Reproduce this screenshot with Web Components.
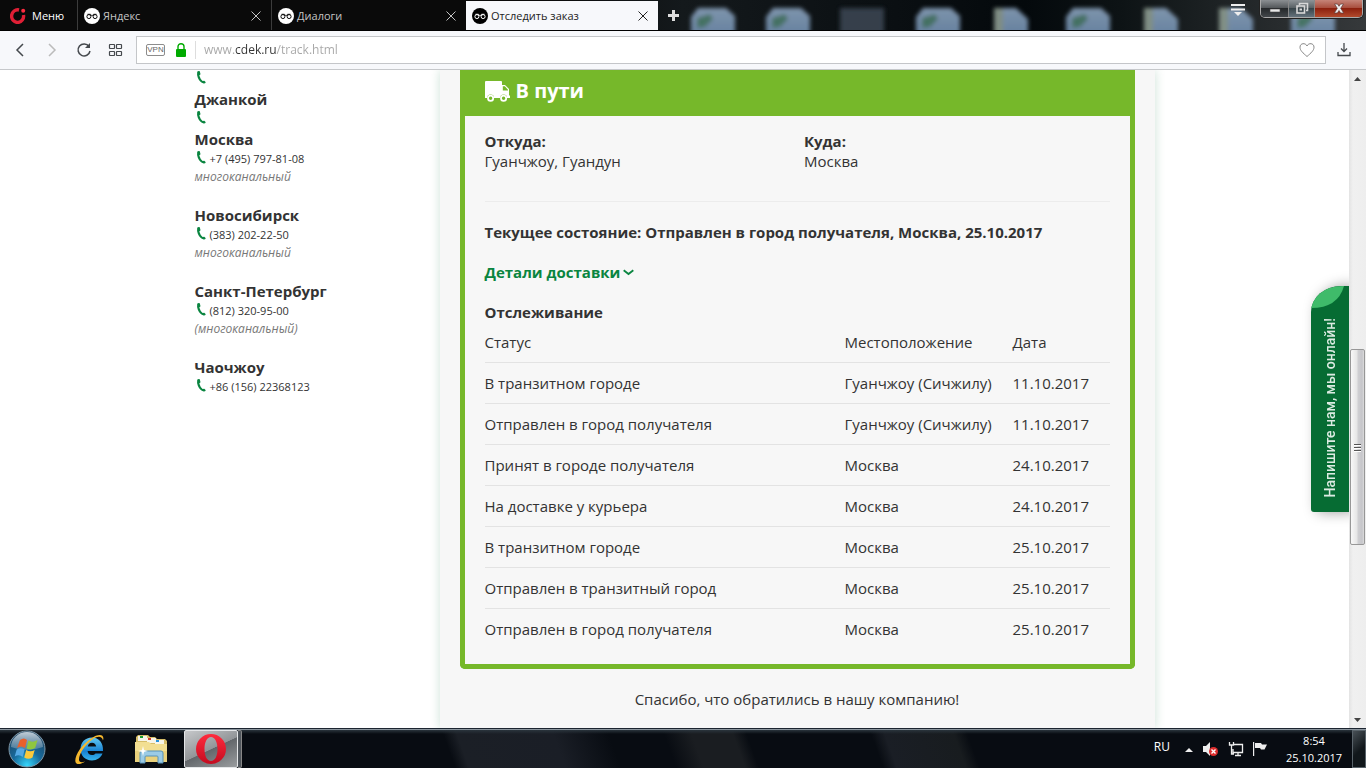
<!DOCTYPE html>
<html lang="ru">
<head>
<meta charset="utf-8">
<title>Отследить заказ</title>
<style>
html,body{margin:0;height:100%}
body{font-family:"Open Sans","Noto Sans",sans-serif;color:#333;background:#fff;overflow:hidden}
</style>
</head>
<body>
<desktop-screen></desktop-screen>
<script>
function define(name, html, setup) {
  const template = document.createElement('template');
  template.innerHTML = '<style>*{box-sizing:border-box}[hidden]{display:none}</style>' + html;
  customElements.define(name, class extends HTMLElement {
    constructor() {
      super();
      this.attachShadow({ mode: 'open' }).append(template.content.cloneNode(true));
    }
    connectedCallback() { if (setup) setup(this.shadowRoot, this); }
  });
}

/* ---------- browser chrome ---------- */
define('browser-tab', `
<style>
:host{display:flex;align-items:center;flex:0 1 194px;min-width:0;height:31px;padding:0 10px 0 6px;border-right:1px solid #3c3c3c;background:#0a0a0a;color:#c4c4c4;font-size:12px;line-height:18px}
:host([active]){flex-basis:192px;height:30px;margin-top:1px;border:0;background:#f7f8fb;color:#222}
:host([last]){border:0}
a{flex:1;display:flex;align-items:center;gap:3px;min-width:0;color:inherit;text-decoration:none;white-space:nowrap;font-size:11px}
svg{flex:none;display:block}
.disc{fill:#fff}.glass{stroke:#0a0a0a}
:host([active]) .disc{fill:#000}:host([active]) .glass{stroke:#fff}
button{border:0;background:none;padding:0;color:inherit;width:10px;height:10px;flex:none}
</style>
<a href="#"><svg width="16" height="16" viewBox="0 0 16 16"><circle class="disc" cx="8" cy="8" r="8"/><g class="glass" fill="none" stroke-width="1"><circle cx="4.900" cy="8.600" r="2"/><circle cx="11.100" cy="8.600" r="2"/><path d="M3.500 6.300h3l1.500 1.500 1.500-1.500h3"/></g></svg><slot></slot></a>
<button aria-label="Закрыть вкладку"><svg width="10" height="10" viewBox="0 0 10 10"><path d="M.5.5l9 9M9.500 .5l-9 9" stroke="currentColor" fill="none"/></svg></button>`);

define('window-controls', `
<style>
:host{display:flex;height:18px;border:1px solid #a9a9a9;border-top:0;border-radius:0 0 5px 5px;overflow:hidden;box-shadow:0 0 0 1px #222}
button{border:0;border-right:1px solid #888;padding:0;display:grid;place-items:center;background:linear-gradient(#8b8f92,#55595c 45%,#25282a 50%,#42464a);width:28px;height:17px}
.max{width:26px;background:linear-gradient(#8e9498,#5a6266 45%,#38454a 50%,#64727c)}
.close{width:47px;border:0;background:linear-gradient(#c58478,#a94f3f 45%,#8c200e 50%,#b24a2c)}
svg{display:block}
</style>
<button aria-label="Свернуть"><svg width="14" height="13"><rect x="2" y="7" width="10" height="3" fill="#e8e8e8" stroke="#444" stroke-width=".6"/></svg></button>
<button class="max" aria-label="Восстановить"><svg width="14" height="13" fill="none" stroke="#d8d8d8" stroke-width="1.6"><path d="M4.500 3V1.500h8v7H11"/><rect x="2" y="4" width="7.500" height="7"/><rect x="5" y="7" width="1.500" height="1" stroke-width="1"/></svg></button>
<button class="close" aria-label="Закрыть"><svg width="14" height="13"><path d="M2.500 2h3l1.500 2.300L8.500 2h3L8.700 6.300 11.700 11H8.600L7 8.500 5.400 11H2.300l3-4.700z" fill="#eee" stroke="#5c3a38" stroke-width=".7"/></svg></button>`);

define('tab-strip', `
<style>
:host{display:flex;position:relative;height:31px;background:linear-gradient(90deg,#0a0a0a 40%,#14191c 50%,#04090c 75%,#0d1315 82%,#36393b 100%);border-bottom:1px solid #000;overflow:hidden}
.glass{position:absolute;left:658px;top:0;z-index:0}
.menu{display:flex;align-items:center;gap:6px;flex:none;width:78px;padding:2px 0 0 10px;border:0;border-right:1px solid #3c3c3c;background:#0a0a0a;color:#fff;font:11px/18px "Open Sans",sans-serif}
browser-tab,.menu,.plus,.list,window-controls{position:relative}
.plus{width:31px;border:0;background:none;padding:0;display:grid;place-items:center}
.space{flex:1}
.list{border:0;background:none;padding:4px 0 0;align-self:flex-start;margin-right:15px}
window-controls{align-self:flex-start;margin-right:3px}
svg{display:block}
</style>
<svg class="glass" width="708" height="31" viewBox="0 0 708 31">
<defs><filter id="b" x="-20%" y="-20%" width="140%" height="140%"><feGaussianBlur stdDeviation="2"/></filter>
<linearGradient id="g" x2="0" y2="1"><stop stop-color="#8ba3bd"/><stop offset="1" stop-color="#6f8cae"/></linearGradient>
<g id="globe"><path d="M0 36V17l7-9h28l9 8v20H0z" fill="url(#g)"/><path d="M6 18l13-4 3 5-8 8-8 1z" fill="#4c7b6c"/></g>
<g id="doc"><path d="M0 8h22l12 11v17H0z" fill="url(#g)"/><path d="M0 8h9v28H0z" fill="#8c9b91"/></g></defs>
<g filter="url(#b)" opacity=".9"><use href="#globe" x="33"/><use href="#globe" x="108"/><path d="M182 8h44v28h-44z" fill="#3a4551"/><use href="#globe" x="258"/><use href="#doc" x="336"/><use href="#globe" x="408"/><use href="#doc" x="486"/><use href="#doc" x="561"/><use href="#globe" x="633"/></g></svg>
<button class="menu"><svg width="16" height="16" viewBox="0 0 16 16"><path d="M9 2A6 6.300 0 1 0 13.500 7" fill="none" stroke="#e01f35" stroke-width="3.400"/><circle cx="13.200" cy="2.800" r="2" fill="#ff2c40"/></svg>Меню</button>
<browser-tab>Яндекс</browser-tab><browser-tab last>Диалоги</browser-tab><browser-tab active>Отследить заказ</browser-tab>
<button class="plus" aria-label="Новая вкладка"><svg width="11" height="11"><path d="M5.500 0v11M0 5.500h11" stroke="#ddd" stroke-width="3"/></svg></button>
<span class="space"></span>
<button class="list" aria-label="Список вкладок"><svg width="14" height="12"><path d="M0 1h14M0 5.500h14" stroke="#eee" stroke-width="2"/><path d="M3 8h8l-4 4z" fill="#eee"/></svg></button>
<window-controls></window-controls>`);

define('address-bar', `
<style>
:host{display:flex;align-items:center;height:39px;padding:0 14px 0 12px;background:#f7f8fb;border-bottom:1px solid #c6c8cb}
nav{display:flex;align-items:center;width:124px;gap:16px;flex:none}
button{border:0;background:none;padding:0;width:16px;height:16px;color:#45494d;flex:none}
svg{display:block}
.dim{color:#bbb}
.field{flex:1;display:flex;align-items:center;height:28px;margin-right:10px;padding:0 10px 0 9px;border:1px solid #c4c6c9;background:#fff}
.vpn{border:1px solid #8c8c8c;border-radius:2px;width:19px;height:12px;font:8px/10px "Liberation Sans",sans-serif;text-align:center;color:#666}
.lock{margin:0 8px 0 10px}
.bar{width:1px;height:18px;background:#ddd;margin-right:8px}
input{flex:1;min-width:0;border:0;outline:0;padding:0;height:20px;font:12px/20px "Open Sans",sans-serif;color:transparent;background:linear-gradient(90deg,#a6a6a6 31px,#333 31px,#333 72px,#a6a6a6 72px);-webkit-background-clip:text;background-clip:text}
</style>
<nav>
<button aria-label="Назад"><svg width="16" height="16"><path d="M11 2L5 8l6 6" fill="none" stroke="currentColor" stroke-width="1.500"/></svg></button>
<button class="dim" aria-label="Вперёд"><svg width="16" height="16"><path d="M5 2l6 6-6 6" fill="none" stroke="currentColor" stroke-width="1.500"/></svg></button>
<button aria-label="Обновить"><svg width="16" height="16"><path d="M13 4.500A6 6 0 1 0 14 9" fill="none" stroke="currentColor" stroke-width="1.500"/><path d="M14 1v5H9z" fill="currentColor"/></svg></button>
<button aria-label="Экспресс-панель"><svg width="16" height="16" fill="none" stroke="currentColor" stroke-width="1.200"><rect x="1.500" y="2.500" width="5" height="4" rx=".5"/><rect x="8.500" y="2.500" width="5" height="4" rx=".5"/><rect x="1.500" y="9.500" width="5" height="4" rx=".5"/><rect x="8.500" y="9.500" width="5" height="4" rx=".5"/></svg></button>
</nav>
<div class="field"><span class="vpn">VPN</span>
<svg class="lock" width="12" height="14"><rect x="1" y="6" width="10" height="8" rx="1" fill="#0a0"/><path d="M3 7V3.500a3 2.800 0 0 1 6 0V7" fill="none" stroke="#0a0" stroke-width="1.400"/></svg>
<span class="bar"></span><input type="text" aria-label="Адрес" value="www.cdek.ru/track.html">
<button aria-label="В закладки"><svg width="16" height="16"><path d="M8 14.500C4 11 1 8.500 1 5.200 1 1 6.500.500 8 4 9.500.5 15 1 15 5.200c0 3.300-3 5.800-7 9.300z" fill="none" stroke="#888"/></svg></button></div>
<button aria-label="Загрузки"><svg width="16" height="16" fill="none" stroke="#45494d" stroke-width="1.300"><path d="M8 1v8M5 6.500l3 3 3-3M2 10v3.500h12V10"/></svg></button>`);

/* ---------- site ---------- */
define('city-contact', `
<style>
:host{display:block;margin-bottom:2px}
:host([note]){margin-bottom:20px}
h3{margin:0;font-size:15px;line-height:18px;font-weight:700}
p{display:flex;gap:3px;margin:0;padding-top:2px;font-size:11px;line-height:18px;min-height:20px}
svg{flex:none;display:block}
em{display:block;font-size:12px;line-height:18px;color:#777}
</style>
<h3></h3><p><svg width="12" height="14" viewBox="0 0 12 14"><path d="M2.200 1.800Q3.200.500 4.800 1.200L5.500 4.300 4.300 5.500Q5.300 9 7.600 11L9.300 10.700 10.800 12.200Q10.200 13.700 8.700 13.600 4.700 12.500 2.800 7.800 1.700 4.500 2.200 1.800z" fill="#0a8540"/></svg><slot></slot></p><em></em>`,
(root, host) => {
  for (const [tag, attr] of [['h3', 'city'], ['em', 'note']]) {
    const el = root.querySelector(tag);
    el.textContent = host.getAttribute(attr) || '';
    el.hidden = !host.getAttribute(attr);
  }
});

define('tracking-table', `
<style>
:host{display:block}
table{width:100%;border-collapse:separate;border-spacing:0;table-layout:fixed;font-size:15px;line-height:20px}
th,td{height:41px;padding:0;border-bottom:1px solid #e3e3e3;text-align:left;font-weight:400;white-space:nowrap}
tr:last-child td{border:0;height:40px}
.place{width:168px}.date{width:97px}
</style>
<table><thead><tr><th>Статус</th><th class="place">Местоположение</th><th class="date">Дата</th></tr></thead><tbody></tbody></table>`,
root => {
  const rows = [
    ['В транзитном городе', 'Гуанчжоу (Сичжилу)', '11.10.2017'],
    ['Отправлен в город получателя', 'Гуанчжоу (Сичжилу)', '11.10.2017'],
    ['Принят в городе получателя', 'Москва', '24.10.2017'],
    ['На доставке у курьера', 'Москва', '24.10.2017'],
    ['В транзитном городе', 'Москва', '25.10.2017'],
    ['Отправлен в транзитный город', 'Москва', '25.10.2017'],
    ['Отправлен в город получателя', 'Москва', '25.10.2017']
  ];
  const body = root.querySelector('tbody');
  body.replaceChildren();
  for (const row of rows) {
    const tr = body.insertRow();
    for (const text of row) tr.insertCell().textContent = text;
  }
});

define('status-card', `
<style>
:host{display:block;border:5px solid #76b82a;border-top:0;border-radius:0 0 5px 5px;font-size:15px;line-height:20px}
h1{display:flex;align-items:center;gap:6px;margin:0;height:46px;padding:0 20px 4px;background:#76b82a;color:#fff;font-size:20px;line-height:28px;font-weight:700}
.body{padding:15px 20px}
.route{display:grid;grid-template-columns:1fr 1fr;gap:14px;margin:0;padding-bottom:30px;border-bottom:1px solid #ececec}
dt{font-weight:700}dd{margin:0}
h2,p{margin:0;font-size:15px;line-height:20px;font-weight:700}
.now{margin-top:20px}
.more{margin:20px 0}
a{display:inline-flex;align-items:center;gap:3px;color:#0a8540;text-decoration:none}
svg{display:block}
</style>
<h1><svg width="25" height="21" viewBox="0 0 25 21"><path fill="#fff" d="M1 0h15q1 0 1 1v3h3l4 4v6l1 1v2h-3a3.400 3.400 0 0 0-6.800 0H9a3.400 3.400 0 0 0-6.800 0H0V1q0-1 1-1z"/><path fill="#76b82a" d="M17.800 5.300h2L23 8.800v.8h-5.200z"/><g fill="#76b82a" stroke="#fff" stroke-width="1.800"><circle cx="5.600" cy="17.300" r="2.600"/><circle cx="18.600" cy="17.300" r="2.600"/></g></svg>В пути</h1>
<div class="body">
<dl class="route"><div><dt>Откуда:</dt><dd>Гуанчжоу, Гуандун</dd></div><div><dt>Куда:</dt><dd>Москва</dd></div></dl>
<p class="now">Текущее состояние: Отправлен в город получателя, Москва, 25.10.2017</p>
<p class="more"><a href="#">Детали доставки<svg width="11" height="8" viewBox="0 0 11 8"><path d="M.7 2.200l4.800 3.800 4.800-3.800" fill="none" stroke="currentColor" stroke-width="1.800"/></svg></a></p>
<h2>Отслеживание</h2>
<tracking-table></tracking-table>
</div>`);

define('chat-tab', `
<style>
:host{display:block;position:absolute;right:0;top:216px}
button{position:relative;display:flex;align-items:center;justify-content:center;width:38px;height:226px;padding:18px 0 0;border:0;border-radius:30px 0 0 3px/26px 0 0 3px;background:#066c33;color:#dcebe2;box-shadow:6px 0 14px rgba(0,0,0,.4);overflow:hidden}
span{writing-mode:vertical-rl;transform:rotate(180deg);font:500 14px/18px Roboto,"Liberation Sans",sans-serif;white-space:nowrap}
svg{position:absolute;left:0;top:0}
</style>
<button><svg width="38" height="24"><path d="M0 22Q4 0 33 0 27 22 0 22z" fill="#3fbb6a"/></svg><span>Напишите нам, мы онлайн!</span></button>`);

define('page-scrollbar', `
<style>
:host{display:flex;flex-direction:column;flex:none;width:17px;background:linear-gradient(90deg,#e3e3e3,#f0f0f0 4px,#eee)}
i{display:grid;place-items:center;height:17px}
.a{flex:262}.b{flex:166}
.thumb{flex:0 0 196px;display:grid;place-items:center;margin:0 1px;border:1px solid #979797;border-radius:2px;background:linear-gradient(90deg,#f8f8f8,#e6e6e6 45%,#cfcfd2 55%,#c6c6ca 85%,#ddd)}
svg{display:block}
</style>
<i><svg width="7" height="4"><path d="M0 4l3.500-4L7 4z" fill="#444"/></svg></i><span class="a"></span>
<span class="thumb"><svg width="7" height="9"><path d="M0 1.500h7M0 4.500h7M0 7.500h7" stroke="#555"/><path d="M0 2.500h7M0 5.500h7M0 8.500h7" stroke="#fff"/></svg></span>
<span class="b"></span><i><svg width="7" height="4"><path d="M0 0h7L3.500 4z" fill="#444"/></svg></i>`);

define('site-view', `
<style>
:host{display:flex;flex:1;min-height:0;overflow:hidden}
.view{position:relative;flex:1;min-width:0;overflow:hidden;background:#fff}
.wrap{display:grid;grid-template-columns:245px minmax(0,1fr);max-width:960px;height:100%;margin:0 auto}
aside{margin-top:-2px}
main{padding:0 20px;background:#f7f7f7;box-shadow:0 0 10px rgba(0,110,60,.2)}
.thanks{margin:20px 0;text-align:center;font-size:15px;line-height:20px}
</style>
<div class="view"><div class="wrap">
<aside>
<city-contact></city-contact>
<city-contact city="Джанкой"></city-contact>
<city-contact city="Москва" note="многоканальный">+7 (495) 797-81-08</city-contact>
<city-contact city="Новосибирск" note="многоканальный">(383) 202-22-50</city-contact>
<city-contact city="Санкт-Петербург" note="(многоканальный)">(812) 320-95-00</city-contact>
<city-contact city="Чаочжоу">+86 (156) 22368123</city-contact>
</aside>
<main><status-card></status-card><p class="thanks">Спасибо, что обратились в нашу компанию!</p></main>
</div><chat-tab></chat-tab></div>
<page-scrollbar></page-scrollbar>`);

/* ---------- taskbar ---------- */
define('task-bar', `
<style>
:host{display:flex;align-items:center;flex:none;height:40px;color:#fff;font:12px/17px "Open Sans",sans-serif;border-top:1px solid #1c2530;
background:linear-gradient(#8b959e 1px,#2a343c 1px,rgba(20,28,34,0) 5px),linear-gradient(70deg,transparent 33%,#1b1f26 34%,#1a1e26 41%,transparent 45%,transparent 49%,#1a1d21 51%,#1a1d21 54%,transparent 55%,transparent 64%,#1a1e25 65%,#181c1f 70%,transparent 71%),#080c12}
button{border:0;background:none;padding:0;color:inherit;font:inherit;flex:none;display:grid;place-items:center;height:38px}
.start{width:54px}.ie{width:72px}.files{width:50px}
.opera{width:54px;margin-left:8px;border:1px solid #e4e6e8;border-radius:2px;background:linear-gradient(155deg,#c6c8ca,#929598 50%,#63676b 51%,#9a9d9f)}
.stack{width:4px;height:38px;border:1px solid #888;border-left:0;background:#50565c;border-radius:0 2px 2px 0}
.space{flex:1}
.tray{display:flex;align-items:center;gap:8px;margin-top:1px}
.lang{margin-right:6px;margin-bottom:6px}
.clock{width:76px;text-align:center;font-size:11px}
.desk{width:14px;border:1px solid #59636a;background:linear-gradient(135deg,#485056,#11171b 55%)}
svg{display:block}
</style>
<button class="start" aria-label="Пуск"><svg width="38" height="38" viewBox="0 0 38 38"><defs><radialGradient id="o" cx=".5" cy=".95" r=".9"><stop stop-color="#35d6fb"/><stop offset=".45" stop-color="#176a9c"/><stop offset="1" stop-color="#1f4461"/></radialGradient><linearGradient id="h" x2="0" y2="1"><stop stop-color="#d4dee6" stop-opacity=".9"/><stop offset="1" stop-color="#9fb8ca" stop-opacity=".35"/></linearGradient></defs><circle cx="19" cy="19" r="18" fill="url(#o)" stroke="#7f98a8"/><path d="M3 17a16 15 0 0 1 32 0Q19 23 3 17z" fill="url(#h)"/><path d="M12 10q4-3 7 0l-2 8q-4-3-8 0z" fill="#e8602c"/><path d="M20.500 10.500q4 2.500 9-.5l-2.300 8q-4 2.700-8.700.5z" fill="#8fc640"/><path d="M8.700 19.500q4-2.500 8 0l-2 7.500q-3.500-3-8-.5z" fill="#55a9e4"/><path d="M18.200 20q4 2.500 8.500 0l-2.200 7.500q-4 2.500-8.300 0z" fill="#fbc93c"/></svg></button>
<button class="ie" aria-label="Internet Explorer"><svg width="36" height="36" viewBox="0 0 36 36"><defs><linearGradient id="e" x2="0" y2="1"><stop stop-color="#62c9f4"/><stop offset=".6" stop-color="#1781d2"/><stop offset="1" stop-color="#37b5ef"/></linearGradient></defs><path d="M20 6.500c-7 0-11.500 5-11.500 11.500S13 29.500 20 29.500c5 0 9-3 10.500-7h-7c-1 1-2 1.500-3.500 1.500-2.500 0-4.200-1.600-4.400-4H31c.5-8-4-13.500-11-13.500zm-4.300 9c.5-2.300 2-3.700 4.300-3.700s3.800 1.400 4.200 3.700z" fill="url(#e)"/><path d="M31 9.500c2-6-4-7.500-12-2C9 14 2 26 3.500 31c1 3.500 6 2 9.500-.5-4 1.500-6 .5-6-2C7 23 13 13.500 21 8c5-3.300 9-3 10 1.500z" fill="#f5b82e"/></svg></button>
<button class="files" aria-label="Проводник"><svg width="34" height="32" viewBox="0 0 34 32"><path d="M2 4l2-2h10l2 2h5l2 2h8l2 2v20H2z" fill="#d6bd68"/><path d="M4 3h9v5H4zM13 5h9v5h-9zM21 7h9v5h-9z" fill="#f7f5e8"/><path d="M6 3h3v2H6z" fill="#1b9e2f"/><path d="M14 5h3v2h-3z" fill="#d53b2b"/><path d="M22 7h3v2h-3z" fill="#2693dd"/><path d="M1 9h14l2 2h16v18H1z" fill="#f2df92"/><path d="M1 18h32v11H1z" fill="#e9d17c"/><path d="M6 30V20q0-2 2-2h19q2 0 2 2v10h-5v-6q0-1-1-1H12q-1 0-1 1v6z" fill="#9bcbe6" stroke="#5792b8"/><path d="M9 13l1 4 4 1-4 1-1 4-1-4-4-1 4-1z" fill="#fff"/></svg></button>
<button class="opera" aria-label="Opera"><svg width="32" height="32" viewBox="0 0 32 32"><defs><linearGradient id="r" x2="0" y2="1"><stop stop-color="#ff2b3d"/><stop offset="1" stop-color="#c40c20"/></linearGradient></defs><path fill="url(#r)" fill-rule="evenodd" d="M16 1a15 15 0 1 0 0 30 15 15 0 0 0 0-30zm0 3c4 0 6.500 5 6.500 12S20 28 16 28 9.500 23 9.500 16 12 4 16 4z"/></svg></button><span class="stack"></span>
<span class="space"></span>
<div class="tray"><span class="lang">RU</span>
<svg width="10" height="16"><path d="M1 11l4-4 4 4z" fill="#eee"/></svg>
<svg width="18" height="16"><path d="M1 5h3l4-4v14L4 11H1z" fill="#eee"/><circle cx="11.500" cy="10.500" r="4.500" fill="#dc2d2d"/><path d="M9.500 8.500l4 4M13.500 8.500l-4 4" stroke="#fff" stroke-width="1.400"/></svg>
<svg width="16" height="16" fill="none" stroke="#eee" stroke-width="1.300"><path d="M6 3.500h8.500v8H5V8M7 14.500h6M10 11.500v3M1.500 1v3h4V1M3.500 4v9H6"/></svg>
<svg width="16" height="16" fill="#eee"><path d="M1 1h1.200v14H1zM3 2h6l1 1.500h5l-2.500 5H9L8 7H3z"/></svg>
<span class="clock">8:54<br>25.10.2017</span></div>
<button class="desk" aria-label="Свернуть все окна"></button>`);

define('desktop-screen', `
<style>:host{display:flex;flex-direction:column;height:100vh}</style>
<tab-strip></tab-strip><address-bar></address-bar><site-view></site-view><task-bar></task-bar>`);
</script>
</body>
</html>
